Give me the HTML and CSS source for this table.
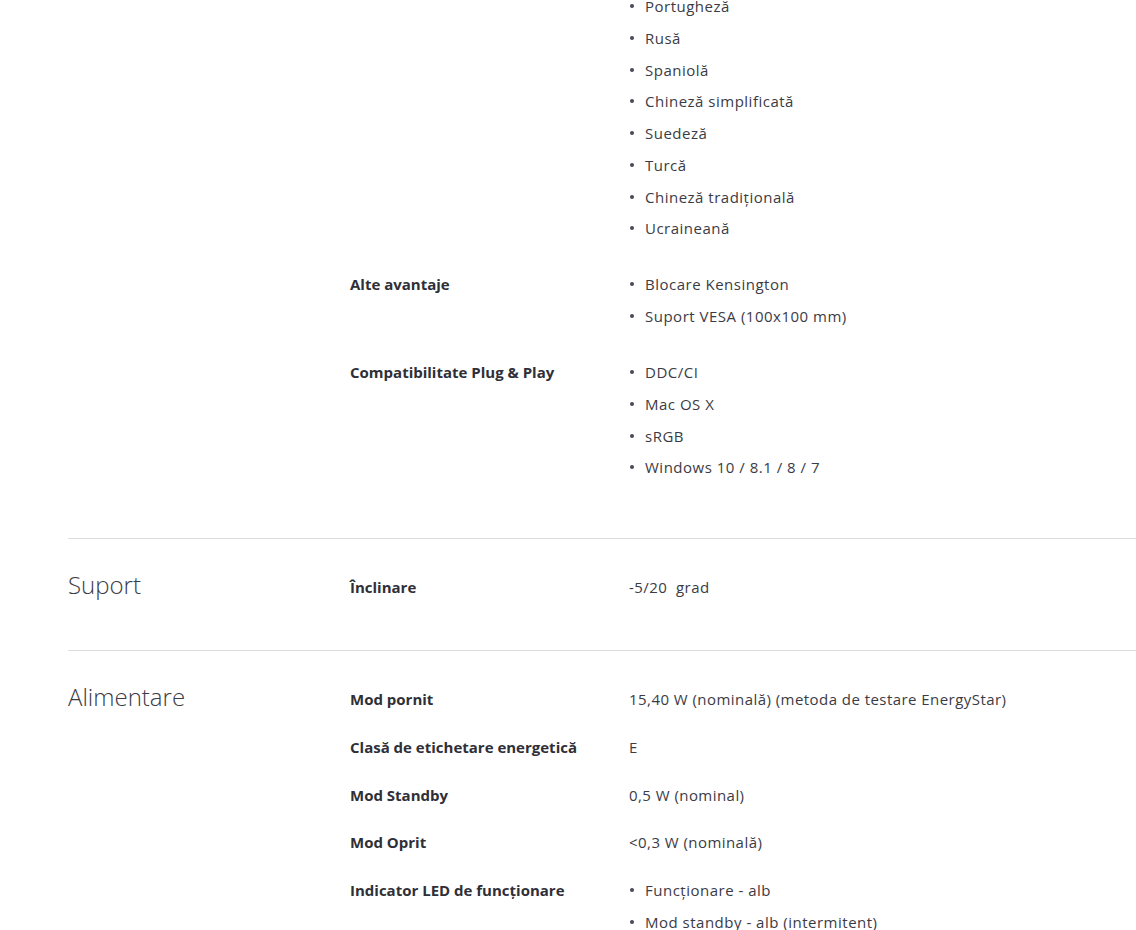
FILE: index.html
```html
<!DOCTYPE html>
<html lang="ro">
<head>
    <meta charset="UTF-8">
    <meta name="viewport" content="width=device-width, initial-scale=1.0">
    <title>Specificații</title>
    <link rel="stylesheet" href="styles.css">
</head>
<body>

    <div class="specs">
        <!-- Continuation of the previous section (languages list) -->
        <section class="spec-section spec-section-cont">
            <h2 class="section-title"></h2>
            <div class="section-rows">
                <div class="spec-row">
                    <div class="spec-label"></div>
                    <ul class="spec-list">
                        <li>Portugheză</li>
                        <li>Rusă</li>
                        <li>Spaniolă</li>
                        <li>Chineză simplificată</li>
                        <li>Suedeză</li>
                        <li>Turcă</li>
                        <li>Chineză tradițională</li>
                        <li>Ucraineană</li>
                    </ul>
                </div>
                <div class="spec-row">
                    <div class="spec-label">Alte avantaje</div>
                    <ul class="spec-list">
                        <li>Blocare Kensington</li>
                        <li>Suport VESA (100x100 mm)</li>
                    </ul>
                </div>
                <div class="spec-row">
                    <div class="spec-label">Compatibilitate Plug &amp; Play</div>
                    <ul class="spec-list">
                        <li>DDC/CI</li>
                        <li>Mac OS X</li>
                        <li>sRGB</li>
                        <li>Windows 10 / 8.1 / 8 / 7</li>
                    </ul>
                </div>
            </div>
        </section>

        <!-- Suport -->
        <section class="spec-section">
            <h2 class="section-title">Suport</h2>
            <div class="section-rows">
                <div class="spec-row">
                    <div class="spec-label">Înclinare</div>
                    <div class="spec-value">-5/20&nbsp; grad</div>
                </div>
            </div>
        </section>

        <!-- Alimentare -->
        <section class="spec-section">
            <h2 class="section-title">Alimentare</h2>
            <div class="section-rows">
                <div class="spec-row">
                    <div class="spec-label">Mod pornit</div>
                    <div class="spec-value">15,40 W (nominală) (metoda de testare EnergyStar)</div>
                </div>
                <div class="spec-row">
                    <div class="spec-label">Clasă de etichetare energetică</div>
                    <div class="spec-value">E</div>
                </div>
                <div class="spec-row">
                    <div class="spec-label">Mod Standby</div>
                    <div class="spec-value">0,5 W (nominal)</div>
                </div>
                <div class="spec-row">
                    <div class="spec-label">Mod Oprit</div>
                    <div class="spec-value">&lt;0,3 W (nominală)</div>
                </div>
                <div class="spec-row">
                    <div class="spec-label">Indicator LED de funcționare</div>
                    <ul class="spec-list">
                        <li>Funcționare - alb</li>
                        <li>Mod standby - alb (intermitent)</li>
                    </ul>
                </div>
            </div>
        </section>
    </div>

</body>
</html>
```

FILE: styles.css
```css
/* Base page */
body {
    margin: 0;
    font-family: "Open Sans", "Lato", Arial, sans-serif;
    font-size: 15px;
    color: #3b3b45;
    background-color: #ffffff;
    overflow: hidden;
}

/* Spec table container, runs off the right edge */
.specs {
    margin-left: 68px;
}

/* Each section: title column + rows */
.spec-section {
    display: grid;
    grid-template-columns: 282px 1fr;
    border-top: 1px solid #dcdcdc;
    padding-top: 36px;
    padding-bottom: 27px;
}

/* First section starts above the visible area */
.spec-section-cont {
    border-top: none;
    padding-top: 0;
    margin-top: -6px;
}

.section-title {
    margin: -2px 0 0 0;
    font-size: 24px;
    font-weight: 300;
    line-height: 24px;
    color: #3b3b45;
}

.spec-row {
    display: grid;
    grid-template-columns: 279px 1fr;
    margin-bottom: 23.75px;
    line-height: 24px;
}

.spec-label {
    font-weight: bold;
    color: #2f2f38;
}

.spec-value {
    color: #3b3b45;
    letter-spacing: 0.45px;
}

/* Bulleted values */
.spec-list {
    list-style: none;
    margin: 0 0 0.5px 0;
    padding: 0;
    letter-spacing: 0.5px;
}

.spec-list li {
    position: relative;
    padding-left: 16px;
    margin-bottom: 7.75px;
}

.spec-list li::before {
    content: "";
    position: absolute;
    left: 1px;
    top: 10px;
    width: 4px;
    height: 4px;
    border-radius: 50%;
    background-color: #4a4a55;
}
```
